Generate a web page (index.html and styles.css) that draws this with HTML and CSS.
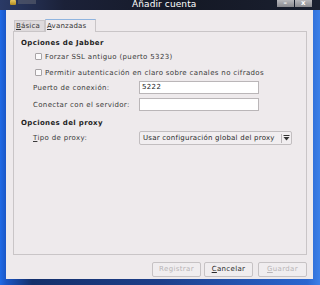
FILE: index.html
```html
<!DOCTYPE html>
<html lang="es">
<head>
    <meta charset="UTF-8">
    <title>Añadir cuenta</title>
    <link rel="stylesheet" href="styles.css">
</head>
<body>
    <div class="titlebar">
        <div class="title-left">
            <span class="app-icon"></span>
            <span class="menu-ghost"></span>
        </div>
        <span class="title">Añadir cuenta</span>
        <div class="wm-buttons">
            <span class="wm-btn">&#8211;</span>
            <span class="wm-btn">x</span>
        </div>
    </div>

    <div class="window">
        <div class="tabs">
            <span class="tab"><u>B</u>ásica</span>
            <span class="tab active"><u>A</u>vanzadas</span>
        </div>

        <div class="panel">
            <h4 class="section">Opciones de Jabber</h4>
            <label class="check first">
                <span class="box"></span>
                <span>Forzar SSL antiguo (puerto 5323)</span>
            </label>
            <label class="check">
                <span class="box"></span>
                <span>Permitir autenticación en claro sobre canales no cifrados</span>
            </label>
            <div class="field first-field">
                <span class="field-label">Puerto de conexión:</span>
                <span class="entry">5222</span>
            </div>
            <div class="field">
                <span class="field-label">Conectar con el servidor:</span>
                <span class="entry"></span>
            </div>

            <h4 class="section proxy">Opciones del proxy</h4>
            <div class="field combo-row">
                <span class="field-label"><u>T</u>ipo de proxy:</span>
                <span class="combo">
                    <span class="combo-text">Usar configuración global del proxy</span>
                    <span class="combo-sep"></span>
                    <span class="combo-arrow">
                        <svg width="7" height="6" viewBox="0 0 7 6">
                            <rect x="0.5" y="0" width="6" height="1" fill="#333"/>
                            <polygon points="0.5,2 6.5,2 3.5,5.5" fill="#333"/>
                        </svg>
                    </span>
                </span>
            </div>
        </div>

        <div class="actions">
            <span class="btn disabled">Registrar</span>
            <span class="btn"><u>C</u>ancelar</span>
            <span class="btn disabled wide"><u>G</u>uardar</span>
        </div>
    </div>
</body>
</html>
```

FILE: styles.css
```css
body {
    margin: 0;
    width: 320px;
    height: 285px;
    overflow: hidden;
    font-family: "DejaVu Sans", sans-serif;
    font-size: 7px;
    letter-spacing: 0.35px;
    color: #3a3a3a;
    background: linear-gradient(90deg, #1f6ae6 0%, #1a55c4 2%, #142f6a 10%, #1d3f8a 50%, #2a66d0 96%, #3c80e8 100%);
}

u {
    text-decoration: underline;
    text-underline-offset: 1px;
}

.titlebar {
    height: 10px;
    display: flex;
    align-items: flex-start;
    overflow: hidden;
    background: linear-gradient(90deg, #2a3a66 0%, #1b2138 20%, #151926 60%, #1a2030 100%);
}

.title-left {
    display: flex;
    width: 122px;
    padding-left: 10px;
    gap: 2px;
}

.app-icon {
    width: 6px;
    height: 5px;
    background: linear-gradient(#e8c860, #b08a20);
    border-radius: 1px;
}

.menu-ghost {
    width: 18px;
    height: 4px;
    background: #5c6070;
    opacity: 0.6;
}

.title {
    flex: 1;
    color: #fff;
    font-size: 9px;
    letter-spacing: 0.1px;
    line-height: 9px;
}

.wm-buttons {
    display: flex;
    gap: 1px;
    padding-right: 8px;
}

.wm-btn {
    width: 17px;
    height: 7px;
    background: linear-gradient(#b8b8bc, #8a8a90);
    color: #fff;
    font-size: 7px;
    line-height: 6px;
    text-align: center;
    font-weight: bold;
}

.window {
    margin-left: 6px;
    width: 294px;
    height: 261px;
    padding: 8px 6px 0 7px;
    background: #eeeaec;
    display: flex;
    flex-direction: column;
}

.tabs {
    display: flex;
    align-items: flex-end;
    padding-left: 1px;
    height: 13px;
}

.tab {
    height: 10px;
    line-height: 10px;
    padding: 0 1px;
    width: 27px;
    border: 1px solid #c9c5c7;
    border-bottom: none;
    background: #dedadc;
    color: #333;
    letter-spacing: 0.2px;
}

.tab.active {
    height: 12px;
    line-height: 12px;
    width: 47px;
    background: #eeeaec;
    border-top: 1px solid #8fb4df;
    margin-bottom: -1px;
    position: relative;
}

.panel {
    height: 216px;
    border: 1px solid #c9c5c7;
    padding: 6px 0 0 7px;
}

.section {
    margin: 0;
    font-size: 7px;
    line-height: 10px;
    font-weight: bold;
    color: #1e1e1e;
}

.section.proxy {
    margin-top: 7px;
}

.check {
    display: flex;
    align-items: center;
    height: 9px;
    margin-top: 7px;
    padding-left: 14px;
    gap: 3px;
}

.check.first {
    margin-top: 4px;
}

.box {
    width: 5px;
    height: 5px;
    border: 1px solid #a8a4a6;
    background: #fbfafb;
    border-radius: 1px;
}

.field {
    display: flex;
    align-items: center;
    height: 13px;
    margin-top: 4px;
    padding-left: 12px;
}

.field.first-field {
    margin-top: 4px;
}

.field-label {
    width: 106px;
}

.entry {
    width: 116px;
    height: 11px;
    line-height: 11px;
    padding-left: 2px;
    border: 1px solid #bab6b8;
    background: #fff;
    color: #222;
}

.combo-row {
    height: 14px;
    margin-top: 3px;
}

.combo {
    display: flex;
    align-items: center;
    width: 151px;
    height: 12px;
    border: 1px solid #c2bec0;
    border-radius: 2px;
    background: #f1eef0;
    color: #2a2a2a;
}

.combo-text {
    flex: 1;
    padding-left: 3px;
    letter-spacing: 0.22px;
    white-space: nowrap;
    overflow: hidden;
}

.combo-sep {
    width: 1px;
    height: 9px;
    background: #b8b4b6;
}

.combo-arrow {
    display: flex;
    width: 9px;
    justify-content: center;
}

.actions {
    display: flex;
    justify-content: flex-end;
    margin-top: 7px;
    gap: 3px;
}

.btn {
    width: 47px;
    height: 13px;
    line-height: 13px;
    text-align: center;
    border: 1px solid #c6c2c4;
    border-radius: 2px;
    background: #f0edef;
    color: #2a2a2a;
}

.btn.disabled {
    color: #b9b5b7;
}

.btn.wide {
    margin-left: 2px;
}
```
